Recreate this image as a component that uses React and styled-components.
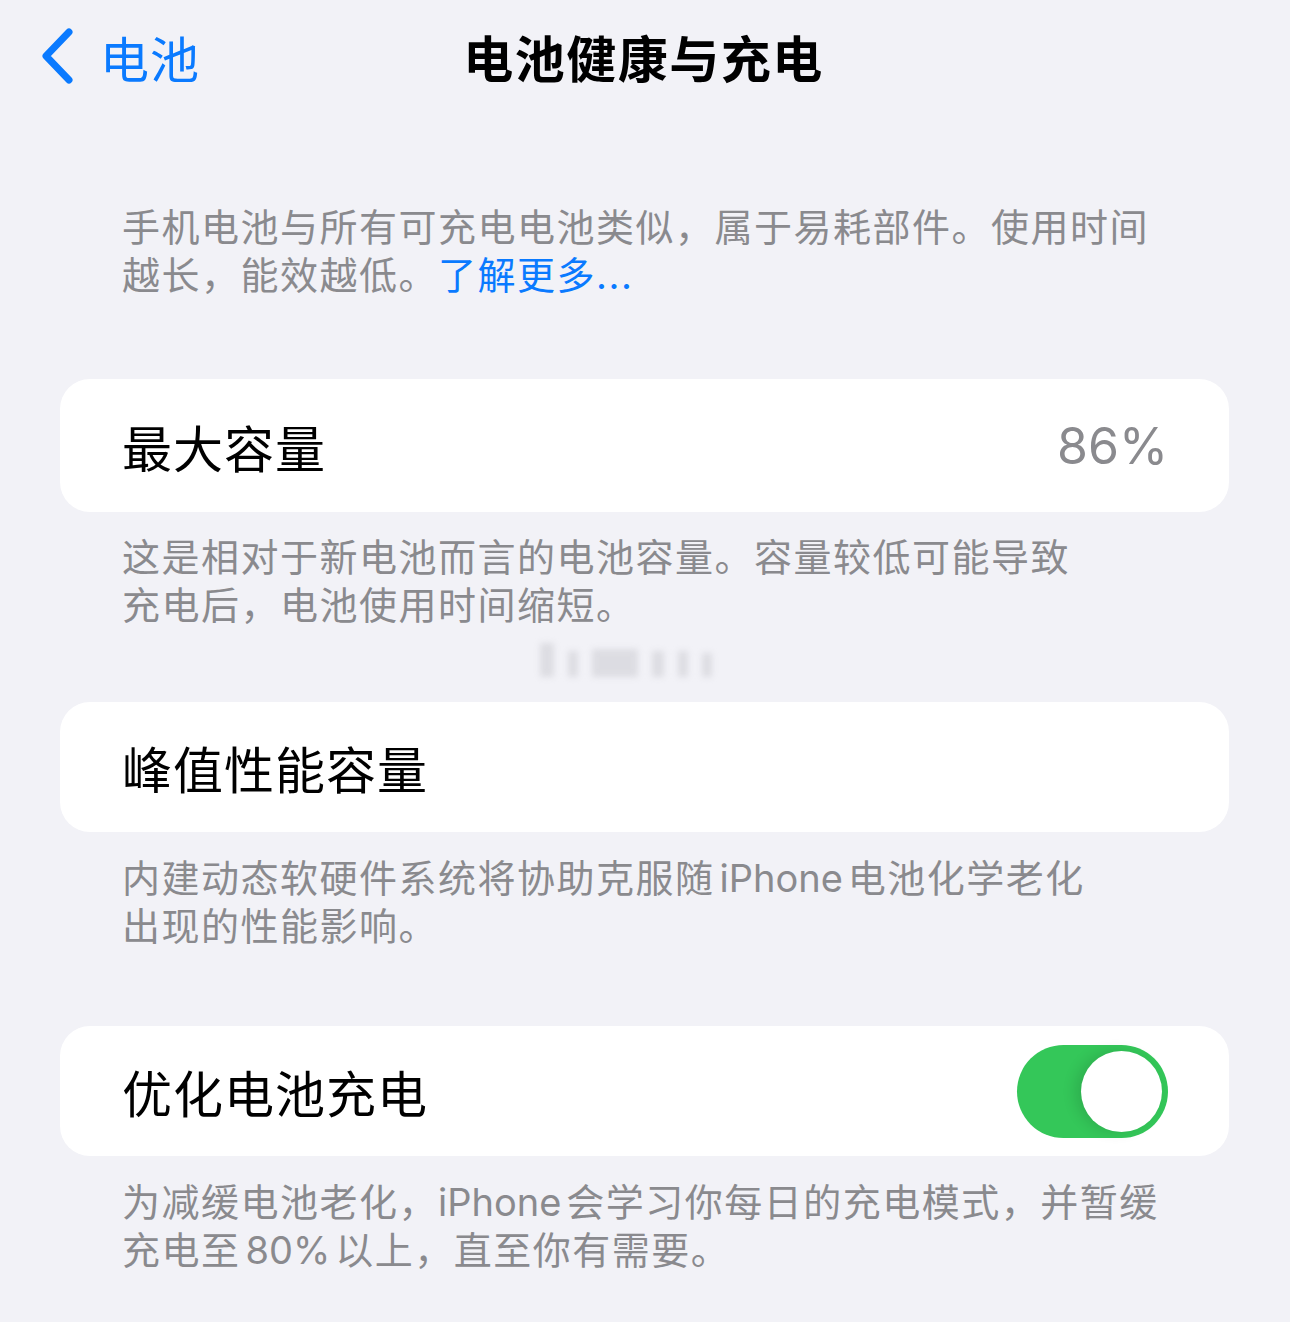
import React from 'react'
import styled, { createGlobalStyle } from 'styled-components'

const GlobalStyle = createGlobalStyle`
  html, body {
    margin: 0;
    padding: 0;
    background: #f2f2f7;
  }
  body {
    font-family: "Inter", "Noto Sans CJK SC", "Noto Sans", sans-serif;
    -webkit-font-smoothing: antialiased;
  }
`

const Page = styled.div`
  width: 1290px;
  min-height: 1322px;
  background: #f2f2f7;
  box-sizing: border-box;
  padding: 0 61px 0 60px;
  display: flex;
  flex-direction: column;
`

const NavBar = styled.div`
  height: 112px;
  display: grid;
  grid-template-columns: 1fr auto 1fr;
  align-items: center;
  margin: 0 0 0 -20px;
`

const BackButton = styled.div`
  display: flex;
  align-items: center;
  gap: 26px;
  color: #0a7aff;
  font-size: 49px;
  letter-spacing: 1px;
  svg {
    display: block;
  }
`

const Title = styled.div`
  font-size: 50px;
  font-weight: 700;
  letter-spacing: 1.5px;
  color: #000;
  transform: translateX(9px);
`

const Note = styled.p`
  margin: ${p => p.$top || 0}px 0 0;
  padding: 0 0 0 62px;
  font-size: 38px;
  line-height: 48px;
  letter-spacing: 1.5px;
  color: #8a8a8e;
`

const Latin = styled.span`
  letter-spacing: 0;
  margin: 0 5px;
`

const Link = styled.span`
  color: #0a7aff;
`

const Card = styled.div`
  margin-top: ${p => p.$top}px;
  height: ${p => p.$height || 130}px;
  background: #fff;
  border-radius: 30px;
  display: flex;
  align-items: center;
  justify-content: space-between;
  padding: 0 61px 0 62px;
`

const Label = styled.span`
  font-size: 50px;
  letter-spacing: 1px;
  color: #000;
`

const Value = styled.span`
  font-size: 50px;
  color: #8a8a8e;
  letter-spacing: 0;
`

const Toggle = styled.div`
  width: 151px;
  height: 93px;
  border-radius: 47px;
  background: #34c759;
  display: flex;
  align-items: center;
  justify-content: flex-end;
  padding: 0 6px;
  box-sizing: border-box;
`

const Knob = styled.div`
  width: 81px;
  height: 81px;
  border-radius: 50%;
  background: #fff;
  box-shadow: -6px 0 14px rgba(0, 0, 0, 0.12);
`

const Smudge = styled.div`
  margin: 14px 0 0 480px;
  height: 34px;
  display: flex;
  align-items: flex-end;
  gap: 14px;
  filter: blur(3px);
  opacity: 0.5;
`

const SmudgeBar = styled.span`
  display: block;
  width: ${p => p.$w}px;
  height: ${p => p.$h}px;
  background: #c8c8ce;
`

const Chevron = () => (
  <svg width="34" height="56" viewBox="0 0 34 56">
    <path d="M29 4 L6 28 L29 52" fill="none" stroke="#0a7aff" strokeWidth="7" strokeLinecap="round" strokeLinejoin="round" />
  </svg>
)

export default function App() {
  return (
    <Page>
      <GlobalStyle />
      <NavBar>
        <BackButton>
          <Chevron />
          <span>电池</span>
        </BackButton>
        <Title>电池健康与充电</Title>
        <div />
      </NavBar>

      <Note $top={91}>
        手机电池与所有可充电电池类似，属于易耗部件。使用时间
        <br />
        越长，能效越低。<Link>了解更多...</Link>
      </Note>

      <Card $top={80} $height={133}>
        <Label>最大容量</Label>
        <Value>86%</Value>
      </Card>
      <Note $top={21}>
        这是相对于新电池而言的电池容量。容量较低可能导致
        <br />
        充电后，电池使用时间缩短。
      </Note>

      <Smudge>
        <SmudgeBar $w={14} $h={34} />
        <SmudgeBar $w={10} $h={26} />
        <SmudgeBar $w={46} $h={28} />
        <SmudgeBar $w={12} $h={26} />
        <SmudgeBar $w={10} $h={26} />
        <SmudgeBar $w={10} $h={24} />
      </Smudge>

      <Card $top={25}>
        <Label>峰值性能容量</Label>
      </Card>
      <Note $top={22}>
        内建动态软硬件系统将协助克服随<Latin>iPhone</Latin>电池化学老化
        <br />
        出现的性能影响。
      </Note>

      <Card $top={76}>
        <Label>优化电池充电</Label>
        <Toggle>
          <Knob />
        </Toggle>
      </Card>
      <Note $top={22}>
        为减缓电池老化，<Latin style={{ marginLeft: 0 }}>iPhone</Latin>会学习你每日的充电模式，并暂缓
        <br />
        充电至<Latin>80%</Latin>以上，直至你有需要。
      </Note>
    </Page>
  )
}
